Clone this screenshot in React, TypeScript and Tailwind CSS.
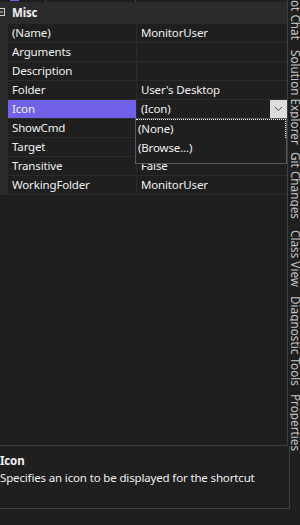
import React from "react";

const rows: [string, string][] = [
  ["(Name)", "MonitorUser"],
  ["Arguments", ""],
  ["Description", ""],
  ["Folder", "User's Desktop"],
  ["Icon", "(Icon)"],
  ["ShowCmd", ""],
  ["Target", ""],
  ["Transitive", "False"],
  ["WorkingFolder", "MonitorUser"],
];

const tabs: { label: string; h: string; first?: boolean }[] = [
  { label: "ot Chat", h: "h-[50px]", first: true },
  { label: "Solution Explorer", h: "h-[102px]" },
  { label: "Git Changes", h: "h-[78px]" },
  { label: "Class View", h: "h-[66px]" },
  { label: "Diagnostic Tools", h: "h-[98px]" },
  { label: "Properties", h: "h-[67px]" },
];

export default function App() {
  return (
    <div className="w-[300px] h-[525px] bg-[#1f1f1f] flex overflow-hidden text-[11.5px] tracking-[-0.15px] text-[#f1f1f1] font-['Noto_Sans','Open_Sans',sans-serif]">
      <div className="w-[290px] flex flex-col shrink-0">
        {/* grid section */}
        <div className="w-[288px] h-[446px] border-r border-b border-[#3d3d3d] relative flex flex-col">
          {/* top strip */}
          <div className="h-[2px] relative">
            <div className="absolute left-[10px] top-0 w-[9px] h-px bg-[#7160e8]" />
            <div className="absolute left-[45px] top-0 w-px h-[2px] bg-[#3d3d3d]" />
            <div className="absolute left-[135px] top-0 w-px h-[2px] bg-[#3d3d3d]" />
          </div>
          {/* header */}
          <div className="h-[21px] bg-[#2b2b2b] flex items-center">
            <svg width="9" height="9" viewBox="0 0 9 9" className="-ml-[4px] shrink-0">
              <rect x="0.5" y="0.5" width="8" height="7" fill="none" stroke="#d0d0d0" strokeWidth="1" />
              <line x1="2" y1="4" x2="7" y2="4" stroke="#d0d0d0" strokeWidth="1" />
            </svg>
            <span className="ml-[7px] font-bold leading-none">Misc</span>
          </div>
          {/* rows */}
          <div className="flex flex-col gap-px bg-[#2b2b2b] py-px">
            {rows.map(([name, value]) => {
              const sel = name === "Icon";
              return (
                <div key={name} className="flex h-[18px]">
                  <div className="w-[8px] shrink-0" />
                  <div
                    className={
                      "w-[128px] shrink-0 flex items-center pl-[4px] " +
                      (sel ? "bg-[#7160e8]" : "bg-[#1f1f1f]")
                    }
                  >
                    <span className="leading-none whitespace-nowrap">{name}</span>
                  </div>
                  <div className="w-px shrink-0" />
                  <div className="flex-1 bg-[#1f1f1f] flex items-center pl-[4px]">
                    <span className="leading-none whitespace-nowrap flex-1">{value}</span>
                    {sel && (
                      <div className="w-[17px] h-[18px] bg-[#dcdcdc] flex items-center justify-center">
                        <svg width="9" height="6" viewBox="0 0 9 6">
                          <polyline points="1,1 4.5,4.5 8,1" fill="none" stroke="#4a4a4a" strokeWidth="1" />
                        </svg>
                      </div>
                    )}
                  </div>
                </div>
              );
            })}
          </div>
          {/* dropdown list */}
          <div className="absolute left-[135px] top-[118px] w-[152px] h-[46px] border border-[#5a5a5a] bg-[#1f1f1f] flex flex-col">
            <div className="h-[19px] border-t border-r border-dotted border-[#f0f0f0] flex items-center pl-[2px]">
              <span className="leading-none">(None)</span>
            </div>
            <div className="h-[19px] flex items-center pl-[2px]">
              <span className="leading-none">(Browse...)</span>
            </div>
          </div>
        </div>
        {/* description */}
        <div className="w-[290px] h-[63px] border-r border-b border-[#3d3d3d] pt-[6px] flex flex-col">
          <div className="font-bold leading-[17px]">Icon</div>
          <div className="leading-[17px] whitespace-nowrap">Specifies an icon to be displayed for the shortcut</div>
        </div>
      </div>
      {/* vertical tab strip */}
      <div className="flex-1 flex flex-col overflow-hidden text-[#c4c4c4] text-[11.75px] tracking-normal">
        {tabs.map((t) => (
          <div
            key={t.label}
            className={t.h + " shrink-0 pt-[6px] -ml-[2px] " + (t.first ? "-mt-[6px]" : "")}
          >
            <span className="[writing-mode:vertical-rl] leading-[16px] whitespace-nowrap">{t.label}</span>
          </div>
        ))}
      </div>
    </div>
  );
}
